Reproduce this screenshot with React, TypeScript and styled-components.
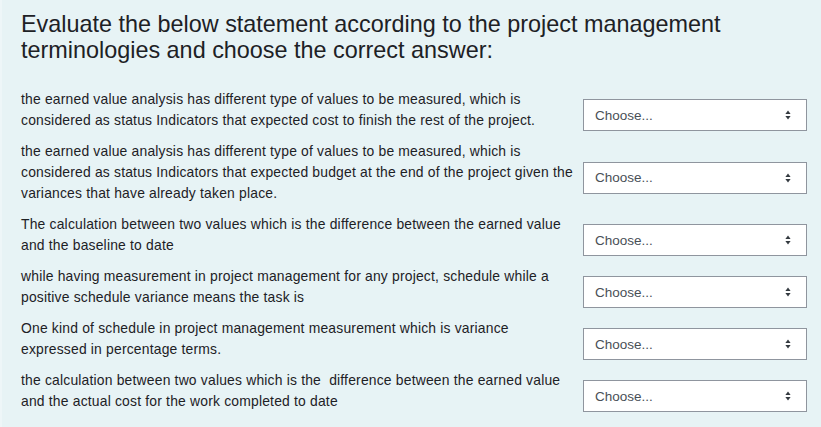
import styled, { createGlobalStyle } from 'styled-components'

const GlobalStyle = createGlobalStyle`
body {
  margin: 0;
  background-color: #eef6f8;
  font-family: "Liberation Sans", Arial, sans-serif;
}
`;

const questions = [
  'the earned value analysis has different type of values to be measured, which is considered as status Indicators that expected cost to finish the rest of the project.',
  'the earned value analysis has different type of values to be measured, which is considered as status Indicators that expected budget at the end of the project given the variances that have already taken place.',
  'The calculation between two values which is the difference between the earned value and the baseline to date',
  'while having measurement in project management for any project, schedule while a positive schedule variance means the task is',
  'One kind of schedule in project management measurement which is variance expressed in percentage terms.',
  'the calculation between two values which is the \u00a0difference between the earned value and the actual cost for the work completed to date',
]

const Arrows = () => (
  <svg width="6" height="10" viewBox="0 0 6 10">
    <path d="M3 0.5 L5.6 4 L0.4 4 Z" fill="#343a40" />
    <path d="M3 9.5 L5.6 6 L0.4 6 Z" fill="#343a40" />
  </svg>
)

const App = () => {
  return (
    <div>
      <GlobalStyle />
      <Panel>
        <Title>
          Evaluate the below statement according to the project management terminologies and choose the correct answer:
        </Title>
        <List>
          {questions.map((q, i) => (
            <Row key={i}>
              <Question>{q}</Question>
              <Select>
                <span>Choose...</span>
                <Arrows />
              </Select>
            </Row>
          ))}
        </List>
      </Panel>
    </div>
  )
}

export default App


const Panel = styled.div`
margin-left: 2px;
min-height: 100vh;
box-sizing: border-box;
background-color: #e7f3f5;
padding: 11px 14px 0 19px;
color: #1d2125;
`;

const Title = styled.h2`
margin: 0;
font-weight: normal;
font-size: 23.4px;
line-height: 26px;
color: #1d2125;
`;

const List = styled.div`
margin-top: 26px;
display: flex;
flex-direction: column;
`;

const Row = styled.div`
display: flex;
align-items: center;
`;

const Question = styled.div`
flex: 1;
font-size: 13.9px;
letter-spacing: 0.19px;
line-height: 21px;
padding-bottom: 10px;
white-space: pre-wrap;
`;

const Select = styled.div`
margin-left: 5px;
width: 224px;
flex-shrink: 0;
height: 32px;
box-sizing: border-box;
border: 1px solid #8f959e;
background-color: white;
display: flex;
justify-content: space-between;
align-items: center;
padding: 0 15px 0 11px;
font-size: 13.5px;
color: #495057;
`;
